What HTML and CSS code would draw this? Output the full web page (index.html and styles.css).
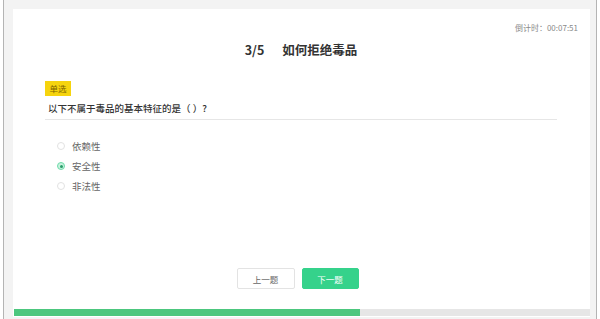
FILE: index.html
```html
<!DOCTYPE html>
<html lang="zh-CN">
<head>
<meta charset="utf-8">
<title>如何拒绝毒品</title>
<link rel="stylesheet" href="styles.css">
</head>
<body>
<div class="frame">
  <div class="card">
    <div class="timer">倒计时：00:07:51</div>
    <div class="body">
      <h1 class="title"><span class="num">3/5</span>如何拒绝毒品</h1>
      <div class="tag-row"><span class="tag">单选</span></div>
      <div class="question">以下不属于毒品的基本特征的是（ ）?</div>
      <ul class="options">
        <li class="option"><span class="radio"></span>依赖性</li>
        <li class="option checked"><span class="radio"></span>安全性</li>
        <li class="option"><span class="radio"></span>非法性</li>
      </ul>
      <div class="actions">
        <button class="btn prev">上一题</button>
        <button class="btn next">下一题</button>
      </div>
    </div>
    <div class="progress"><div class="fill" style="width:60%"></div></div>
  </div>
</div>
</body>
</html>
```
FILE: styles.css
```css
* { box-sizing: border-box; }
html, body { margin: 0; padding: 0; background: #fff; }
body {
  font-family: "Noto Sans CJK SC", "Noto Sans", "Liberation Sans", sans-serif;
  color: #333;
}
.frame {
  margin: 0 3px;
  height: 319px;
  border-left: 1px solid #b4b4b4;
  border-right: 1px solid #b4b4b4;
  background: #f3f3f3;
  padding: 9px 6px 2px 9px;
}
.card {
  height: 308px;
  background: #fff;
  display: flex;
  flex-direction: column;
}
.timer {
  margin-top: 13px;
  padding-right: 12px;
  text-align: right;
  font-size: 8px;
  line-height: 12px;
  font-weight: 400;
  color: #8a8a8a;
}
.body {
  flex: 1;
  display: flex;
  flex-direction: column;
  padding: 0 33px 0 32px;
}
.title {
  margin: 7px 0 0;
  text-align: center;
  font-size: 12.5px;
  line-height: 18px;
  font-weight: 700;
  color: #333;
}
.title .num { margin-right: 18px; }
.tag-row { margin-top: 22px; display: flex; }
.tag {
  background: #f6d40e;
  color: #7d6300;
  font-size: 8.5px;
  line-height: 15px;
  height: 15px;
  padding: 0 4.5px;
}
.question {
  margin-top: 5px;
  padding: 0 0 4px 3px;
  border-bottom: 1px solid #e6e6e6;
  font-size: 9.5px;
  line-height: 14px;
  font-weight: 500;
  color: #333;
}
.options {
  list-style: none;
  margin: 16px 0 0;
  padding: 0 0 0 12px;
}
.option {
  display: flex;
  align-items: center;
  height: 20px;
  font-size: 9.5px;
  color: #666;
}
.radio {
  width: 8px;
  height: 8px;
  border-radius: 50%;
  border: 1px solid #e2e2e2;
  margin-right: 7px;
  display: flex;
  align-items: center;
  justify-content: center;
}
.option.checked .radio {
  border-color: #6edcaa;
  background: #c9f2df;
}
.option.checked .radio::after {
  content: "";
  width: 3px;
  height: 3px;
  border-radius: 50%;
  background: #2a9e6b;
}
.actions {
  margin-top: auto;
  margin-bottom: 20px;
  display: flex;
  justify-content: center;
  gap: 7px;
  padding-right: 7px;
}
.btn {
  width: 58px;
  height: 21px;
  border-radius: 2px;
  font-family: inherit;
  font-size: 8.5px;
  padding: 0;
  cursor: pointer;
}
.btn.prev {
  background: #fff;
  border: 1px solid #e3e3e3;
  color: #666;
}
.btn.next {
  width: 57px;
  background: #35d28b;
  border: 1px solid #35d28b;
  color: #fff;
}
.progress {
  height: 7px;
  margin: 0 0 1px 1px;
  background: #e6e6e6;
}
.fill {
  height: 100%;
  background: #4cc77e;
}
```
